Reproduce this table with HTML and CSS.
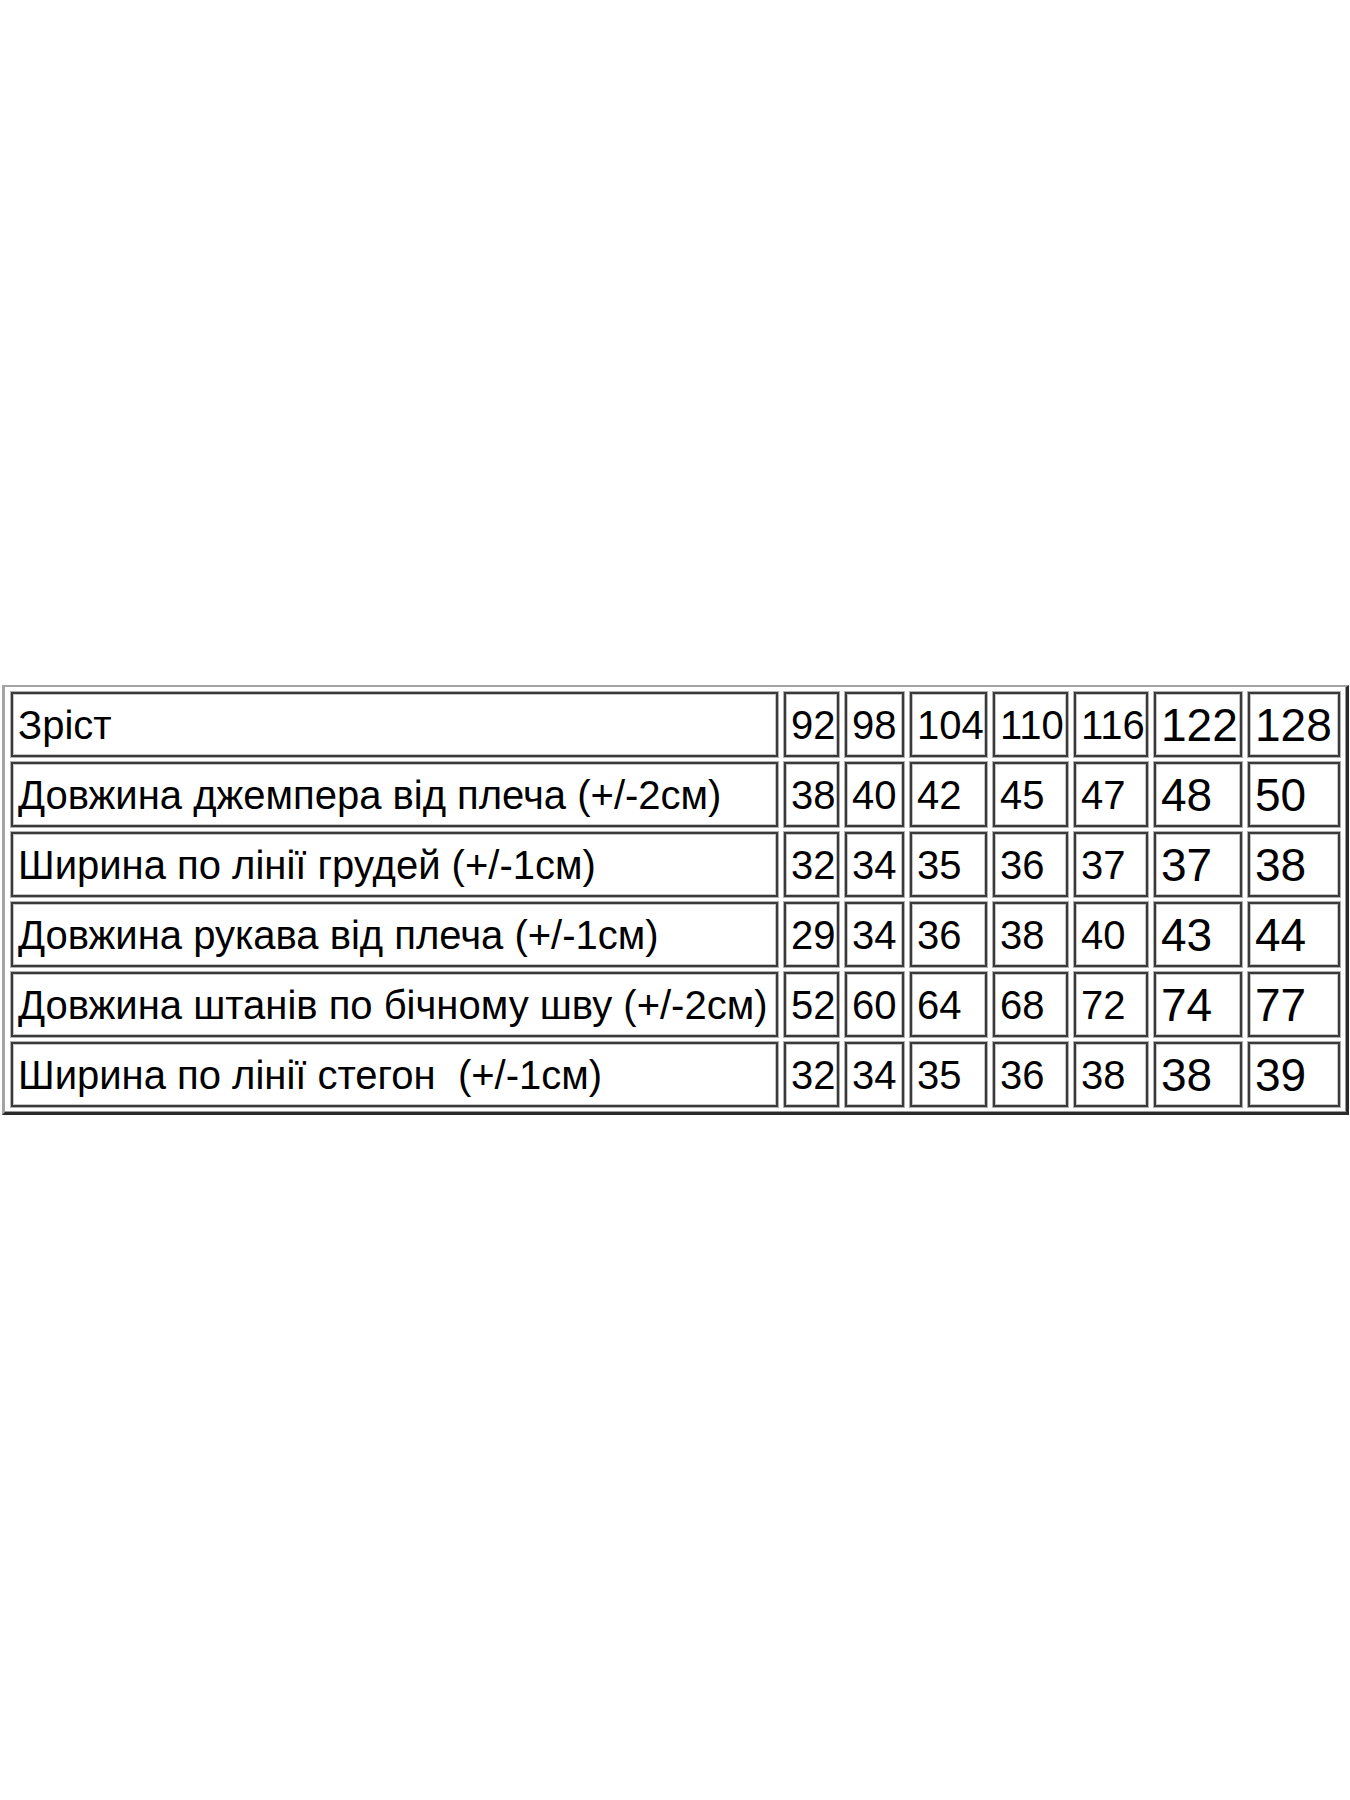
FILE: index.html
```html
<!DOCTYPE html>
<html lang="uk">
<head>
<meta charset="utf-8">
<title>Розмірна сітка</title>
<link rel="stylesheet" href="styles.css">
</head>
<body>
<main class="page">
  <table class="sizes">
    <colgroup>
      <col class="c-label">
      <col class="c-92">
      <col class="c-98">
      <col class="c-104">
      <col class="c-110">
      <col class="c-116">
      <col class="c-122">
      <col class="c-128">
    </colgroup>
    <tbody>
      <tr><td>Зріст</td><td>92</td><td>98</td><td>104</td><td>110</td><td>116</td><td class="big">122</td><td class="big">128</td></tr>
      <tr><td>Довжина джемпера від плеча (+/-2см)</td><td>38</td><td>40</td><td>42</td><td>45</td><td>47</td><td class="big">48</td><td class="big">50</td></tr>
      <tr><td>Ширина по лінії грудей (+/-1см)</td><td>32</td><td>34</td><td>35</td><td>36</td><td>37</td><td class="big">37</td><td class="big">38</td></tr>
      <tr><td>Довжина рукава від плеча (+/-1см)</td><td>29</td><td>34</td><td>36</td><td>38</td><td>40</td><td class="big">43</td><td class="big">44</td></tr>
      <tr><td>Довжина штанів по бічному шву (+/-2см)</td><td>52</td><td>60</td><td>64</td><td>68</td><td>72</td><td class="big">74</td><td class="big">77</td></tr>
      <tr><td>Ширина по лінії стегон&nbsp; (+/-1см)</td><td>32</td><td>34</td><td>35</td><td>36</td><td>38</td><td class="big">38</td><td class="big">39</td></tr>
    </tbody>
  </table>
</main>
</body>
</html>
```
FILE: styles.css
```css
html, body {
  margin: 0;
  padding: 0;
  background: #ffffff;
}

.page {
  height: 1800px;
  display: flex;
  align-items: center;
  padding-left: 2px;
  box-sizing: border-box;
}

.sizes {
  table-layout: fixed;
  border-collapse: separate;
  border-spacing: 6px 5px;
  border-style: solid;
  border-width: 2px 3px 3px 3px;
  border-color: #a4a4a4 #2a2a2a #2a2a2a #a4a4a4;
  box-shadow: inset -1px -1px 0 #9a9a9a;
  font-family: "Liberation Sans", Arial, sans-serif;
  color: #000;
}

.c-label { width: 767px; }
.c-92 { width: 55px; }
.c-98 { width: 59px; }
.c-104 { width: 77px; }
.c-110 { width: 75px; }
.c-116 { width: 74px; }
.c-122 { width: 88px; }
.c-128 { width: 92px; }

.sizes td {
  box-sizing: border-box;
  height: 65px;
  padding: 0 0 0 5px;
  border: 2px solid #3a3a3a;
  box-shadow: 0 0 0 1px #b0b0b0, inset 0 0 0 1px #c4c4c4;
  font-size: 40px;
  line-height: 1;
  white-space: nowrap;
  overflow: hidden;
  vertical-align: middle;
  text-align: left;
}

.sizes td.big {
  font-size: 46px;
}
```
